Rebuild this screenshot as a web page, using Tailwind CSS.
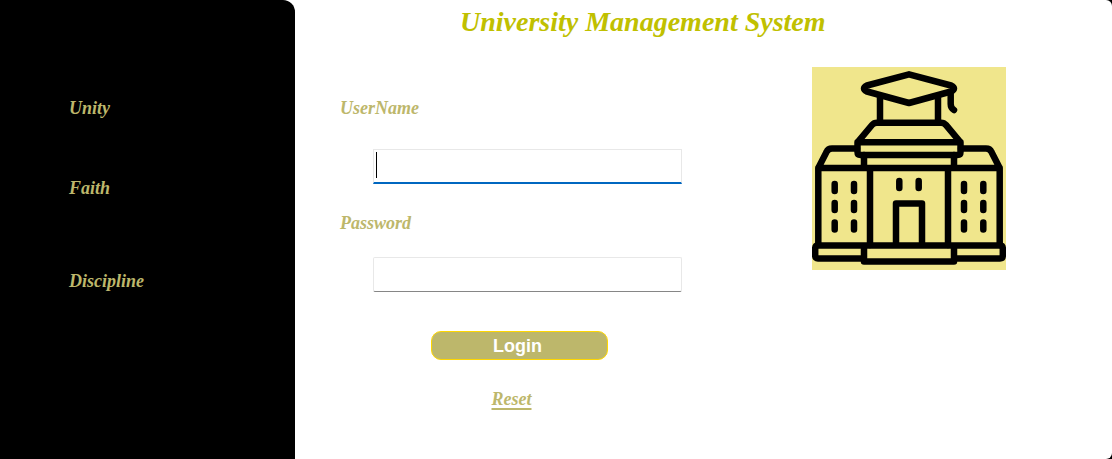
<!DOCTYPE html>
<html lang="en">
<head>
<meta charset="utf-8">
<meta name="viewport" content="width=device-width, initial-scale=1">
<title>University Management System</title>
<script src="https://cdn.jsdelivr.net/npm/@tailwindcss/browser@4"></script>
</head>
<body class="bg-black font-['Liberation_Serif',serif] text-lg leading-6 font-bold italic text-[#bdb76b]">
<div class="flex min-h-screen rounded-r-md bg-white">
  <aside class="w-[295px] shrink-0 rounded-tr-xl bg-black pt-24 pl-[69px]">
    <p>Unity</p>
    <p class="mt-14">Faith</p>
    <p class="mt-[69px]">Discipline</p>
  </aside>
  <main class="min-w-0 flex-1 pl-[45px]">
    <h1 class="pt-1 pl-[120px] text-[28px] leading-9 text-[#c0c000]">University Management System</h1>
    <div class="flex items-start gap-[130px]">
      <form class="w-[342px] shrink-0 pt-14">
        <label for="username" class="block">UserName</label>
        <div class="relative mt-[29px] ml-[33px]">
          <input id="username" type="text" class="block h-[35px] w-full border border-b-2 border-[#e8e8e8] border-b-[#0067c0] bg-white px-1 text-base font-normal text-black not-italic outline-none">
          <span class="absolute top-[3px] left-[3px] h-[26px] w-px bg-black" aria-hidden="true"></span>
        </div>
        <label for="password" class="mt-[27px] block">Password</label>
        <input id="password" type="password" class="mt-[22px] ml-[33px] block h-[35px] w-[309px] rounded-xs border border-[#e8e8e8] border-b-[#868686] bg-white px-1 text-base font-normal text-black not-italic outline-none">
        <div class="mt-[39px] ml-[91px] flex w-[177px] flex-col items-center pr-0">
          <button type="submit" class="h-[29px] w-full rounded-[10px] border border-[#ffd700] bg-[#bdb76b] pr-1 font-['Liberation_Sans',sans-serif] text-lg leading-6 font-bold text-white not-italic">Login</button>
          <a href="#" class="mt-[27px] mr-4 underline decoration-2 underline-offset-3">Reset</a>
        </div>
      </form>
      <svg class="mt-[27px] h-[203px] w-[194px] shrink-0 bg-[#f0e68c]" viewBox="0 0 194 203" fill="none" stroke="#000" stroke-width="6.5" stroke-linecap="round" stroke-linejoin="round" role="img" aria-label="University building">
        <path d="M97 7.300 139 18.500Q145 21.500 139 24.500L97 36 55 24.500Q49 21.500 55 18.500Z"/>
        <path d="M138.700 27V37Q138.700 41 142 43M68 30V55M126 30V55"/>
        <path d="M45.500 75.300 60 58Q62 55.700 65 55.700H129Q132 55.700 134 58L148.500 75.300V85Q148.500 88 145.500 88H48.500Q45.500 88 45.500 85ZH148.500"/>
        <path d="M52 88V101M142 88V101M45 81.500H20Q16 81.500 14.500 85L6.300 101V178M149 81.500H174Q178 81.500 179.500 85L187.700 101V178M6.300 101H187.700M58 101V178M136 101V178"/>
        <path d="M84 178V136.500H110V178M52 191.500H6Q3.200 191.500 3.200 188.500V181.500Q3.200 178.500 6 178.500H188Q190.800 178.500 190.800 181.500V188.500Q190.800 191.500 188 191.500H142M52 178.500V194.500H142V178.500"/>
        <path d="M87.300 114V121M106.700 114V121M22.700 117V124M22.700 136V143M22.700 155.500V162.500M42 117V124M42 136V143M42 155.500V162.500M152 117V124M152 136V143M152 155.500V162.500M171.300 117V124M171.300 136V143M171.300 155.500V162.500"/>
      </svg>
    </div>
  </main>
</div>
</body>
</html>
